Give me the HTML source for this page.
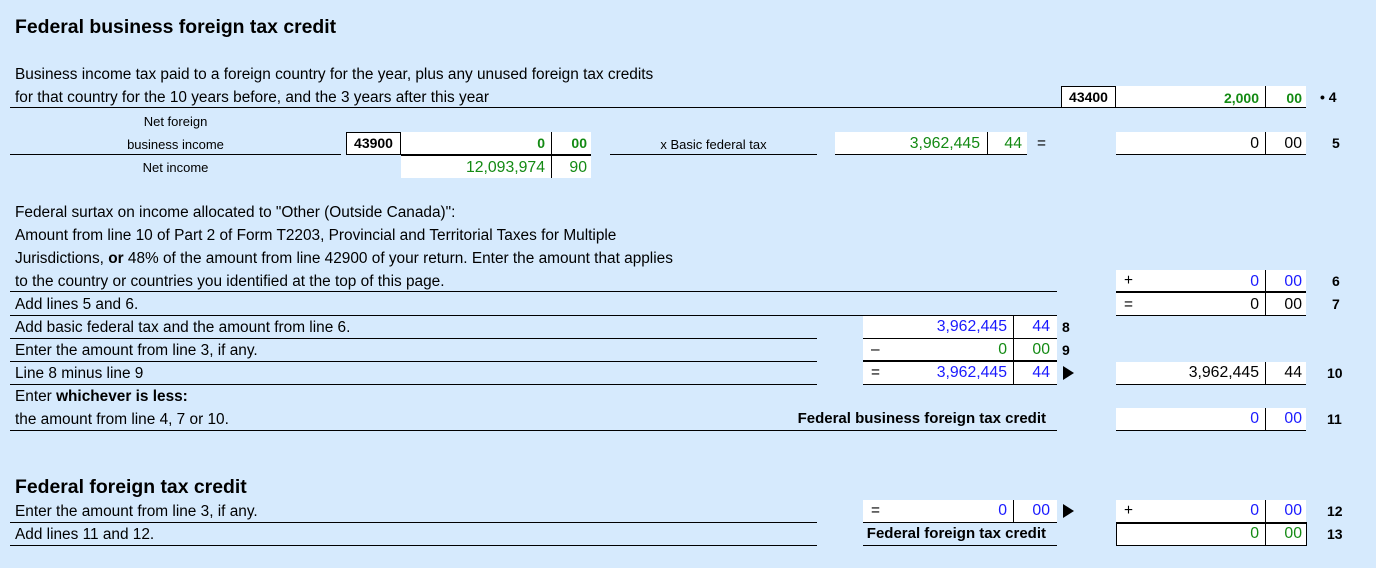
<!DOCTYPE html>
<html><head><meta charset="utf-8"><style>
body{margin:0;width:1376px;height:568px;background:#d6eafd;font-family:"Liberation Sans",Arial,sans-serif;font-size:15.4px;color:#000;position:relative;overflow:hidden}
div{position:absolute;white-space:nowrap}
.t{line-height:18px}
.b{font-weight:bold}
.h{font-size:19.4px;font-weight:bold;line-height:24px}
.ln{height:1px;background:#000}
.tk{height:2px;background:#000}
.w{background:#fff}
.vd{width:1px;background:#000}
.r{text-align:right;font-size:15.8px}
.r.b{font-size:14px}
.sm{font-size:13px}
.n{font-size:14px;font-weight:bold}
.lb{font-size:15px;font-weight:bold;text-align:right}
.g{color:#138a13}
.bl{color:#1a1aff}
.box{border:1px solid #000;background:#fff;font-weight:bold;text-align:center;box-sizing:border-box;font-size:14px}
.tri{width:0;height:0;border-top:7px solid transparent;border-bottom:7px solid transparent;border-left:11px solid #000}
</style></head><body>
<div class="h" style="left:15px;top:15px">Federal business foreign tax credit</div>

<div class="t" style="left:15px;top:66px">Business income tax paid to a foreign country for the year, plus any unused foreign tax credits</div>
<div class="t" style="left:15px;top:89px">for that country for the 10 years before, and the 3 years after this year</div>
<div class="ln" style="left:10px;top:107px;width:1296px"></div>
<div class="box" style="left:1061px;top:86px;width:55px;height:22px;line-height:20px">43400</div>
<div class="w" style="left:1116px;top:86px;width:190px;height:21px"></div>
<div class="vd" style="left:1265px;top:86px;height:21px"></div>
<div class="t b g r" style="left:1116px;top:89px;width:143px">2,000</div>
<div class="t b g r" style="left:1266px;top:89px;width:36px">00</div>
<div class="t n" style="left:1320px;top:88px">• 4</div>

<div class="t sm" style="left:10px;top:113px;width:331px;text-align:center">Net foreign</div>
<div class="t sm" style="left:10px;top:136px;width:331px;text-align:center">business income</div>
<div class="ln" style="left:10px;top:154px;width:331px"></div>
<div class="box" style="left:346px;top:132px;width:55px;height:23px;line-height:21px">43900</div>
<div class="w" style="left:401px;top:132px;width:190px;height:46px"></div>
<div class="vd" style="left:551px;top:132px;height:46px"></div>
<div class="tk" style="left:401px;top:154px;width:190px"></div>
<div class="t b g r" style="left:401px;top:134px;width:144px">0</div>
<div class="t b g r" style="left:552px;top:134px;width:35px">00</div>
<div class="t sm" style="left:10px;top:159px;width:331px;text-align:center">Net income</div>
<div class="t g r" style="left:401px;top:159px;width:144px">12,093,974</div>
<div class="t g r" style="left:552px;top:159px;width:35px">90</div>

<div class="t sm" style="left:610px;top:136px;width:207px;text-align:center">x Basic federal tax</div>
<div class="ln" style="left:610px;top:154px;width:207px"></div>
<div class="w" style="left:835px;top:132px;width:192px;height:22px"></div>
<div class="vd" style="left:987px;top:132px;height:22px"></div>
<div class="ln" style="left:835px;top:154px;width:192px"></div>
<div class="t g r" style="left:835px;top:135px;width:145px">3,962,445</div>
<div class="t g r" style="left:988px;top:135px;width:34px">44</div>
<div class="t" style="left:1037px;top:135px">=</div>
<div class="w" style="left:1116px;top:132px;width:190px;height:22px"></div>
<div class="vd" style="left:1265px;top:132px;height:22px"></div>
<div class="ln" style="left:1116px;top:154px;width:190px"></div>
<div class="t r" style="left:1116px;top:135px;width:143px">0</div>
<div class="t r" style="left:1266px;top:135px;width:36px">00</div>
<div class="t n" style="left:1332px;top:134px">5</div>

<div class="t" style="left:15px;top:204px">Federal surtax on income allocated to "Other (Outside Canada)":</div>
<div class="t" style="left:15px;top:227px">Amount from line 10 of Part 2 of Form T2203, Provincial and Territorial Taxes for Multiple</div>
<div class="t" style="left:15px;top:250px">Jurisdictions, <b>or</b> 48% of the amount from line 42900 of your return. Enter the amount that applies</div>
<div class="t" style="left:15px;top:273px">to the country or countries you identified at the top of this page.</div>
<div class="ln" style="left:10px;top:291px;width:1047px"></div>
<div class="w" style="left:1116px;top:270px;width:190px;height:45px"></div>
<div class="vd" style="left:1265px;top:270px;height:45px"></div>
<div class="tk" style="left:1116px;top:291px;width:190px"></div>
<div class="ln" style="left:1116px;top:315px;width:190px"></div>
<div class="t" style="left:1124px;top:272px">+</div>
<div class="t bl r" style="left:1116px;top:273px;width:143px">0</div>
<div class="t bl r" style="left:1266px;top:273px;width:36px">00</div>
<div class="t n" style="left:1332px;top:272px">6</div>
<div class="t" style="left:15px;top:296px">Add lines 5 and 6.</div>
<div class="ln" style="left:10px;top:315px;width:1047px"></div>
<div class="t" style="left:1124px;top:296px">=</div>
<div class="t r" style="left:1116px;top:296px;width:143px">0</div>
<div class="t r" style="left:1266px;top:296px;width:36px">00</div>
<div class="t n" style="left:1332px;top:295px">7</div>

<div class="t" style="left:15px;top:319px">Add basic federal tax and the amount from line 6.</div>
<div class="ln" style="left:10px;top:338px;width:807px"></div>
<div class="t" style="left:15px;top:342px">Enter the amount from line 3, if any.</div>
<div class="ln" style="left:10px;top:361px;width:807px"></div>
<div class="t" style="left:15px;top:365px">Line 8 minus line 9</div>
<div class="ln" style="left:10px;top:384px;width:807px"></div>
<div class="w" style="left:863px;top:316px;width:194px;height:68px"></div>
<div class="vd" style="left:1013px;top:316px;height:68px"></div>
<div class="ln" style="left:863px;top:338px;width:194px"></div>
<div class="tk" style="left:863px;top:360px;width:194px"></div>
<div class="ln" style="left:863px;top:384px;width:194px"></div>
<div class="t bl r" style="left:863px;top:318px;width:144px">3,962,445</div>
<div class="t bl r" style="left:1014px;top:318px;width:36px">44</div>
<div class="t n" style="left:1062px;top:318px">8</div>
<div class="t" style="left:871px;top:341px">–</div>
<div class="t g r" style="left:863px;top:341px;width:144px">0</div>
<div class="t g r" style="left:1014px;top:341px;width:36px">00</div>
<div class="t n" style="left:1062px;top:341px">9</div>
<div class="t" style="left:871px;top:364px">=</div>
<div class="t bl r" style="left:863px;top:364px;width:144px">3,962,445</div>
<div class="t bl r" style="left:1014px;top:364px;width:36px">44</div>
<div class="tri" style="left:1063px;top:366px"></div>
<div class="w" style="left:1116px;top:362px;width:190px;height:22px"></div>
<div class="vd" style="left:1265px;top:362px;height:22px"></div>
<div class="ln" style="left:1116px;top:384px;width:190px"></div>
<div class="t r" style="left:1116px;top:364px;width:143px">3,962,445</div>
<div class="t r" style="left:1266px;top:364px;width:36px">44</div>
<div class="t n" style="left:1327px;top:364px">10</div>

<div class="t" style="left:15px;top:388px">Enter <b>whichever is less:</b></div>
<div class="t" style="left:15px;top:411px">the amount from line 4, 7 or 10.</div>
<div class="t lb" style="left:700px;top:410px;width:346px">Federal business foreign tax credit</div>
<div class="ln" style="left:10px;top:430px;width:1047px"></div>
<div class="w" style="left:1116px;top:408px;width:190px;height:22px"></div>
<div class="vd" style="left:1265px;top:408px;height:22px"></div>
<div class="ln" style="left:1116px;top:430px;width:190px"></div>
<div class="t bl r" style="left:1116px;top:410px;width:143px">0</div>
<div class="t bl r" style="left:1266px;top:410px;width:36px">00</div>
<div class="t n" style="left:1327px;top:410px">11</div>

<div class="h" style="left:15px;top:475px">Federal foreign tax credit</div>
<div class="t" style="left:15px;top:503px">Enter the amount from line 3, if any.</div>
<div class="ln" style="left:10px;top:522px;width:807px"></div>
<div class="w" style="left:863px;top:500px;width:194px;height:22px"></div>
<div class="vd" style="left:1013px;top:500px;height:22px"></div>
<div class="ln" style="left:863px;top:522px;width:194px"></div>
<div class="t" style="left:871px;top:502px">=</div>
<div class="t bl r" style="left:863px;top:502px;width:144px">0</div>
<div class="t bl r" style="left:1014px;top:502px;width:36px">00</div>
<div class="tri" style="left:1063px;top:504px"></div>
<div class="w" style="left:1116px;top:500px;width:190px;height:22px"></div>
<div class="vd" style="left:1265px;top:500px;height:45px"></div>
<div class="t" style="left:1124px;top:502px">+</div>
<div class="t bl r" style="left:1116px;top:502px;width:143px">0</div>
<div class="t bl r" style="left:1266px;top:502px;width:36px">00</div>
<div class="t n" style="left:1327px;top:502px">12</div>
<div class="t" style="left:15px;top:526px">Add lines 11 and 12.</div>
<div class="ln" style="left:10px;top:545px;width:807px"></div>
<div class="t lb" style="left:800px;top:525px;width:246px">Federal foreign tax credit</div>
<div class="ln" style="left:863px;top:545px;width:194px"></div>
<div style="left:1116px;top:522px;width:191px;height:24px;border:1px solid #000;border-top-width:2px;box-sizing:border-box;background:#fff"></div>
<div class="vd" style="left:1265px;top:522px;height:23px"></div>
<div class="t g r" style="left:1116px;top:525px;width:143px">0</div>
<div class="t g r" style="left:1266px;top:525px;width:36px">00</div>
<div class="t n" style="left:1327px;top:525px">13</div>
</body></html>
